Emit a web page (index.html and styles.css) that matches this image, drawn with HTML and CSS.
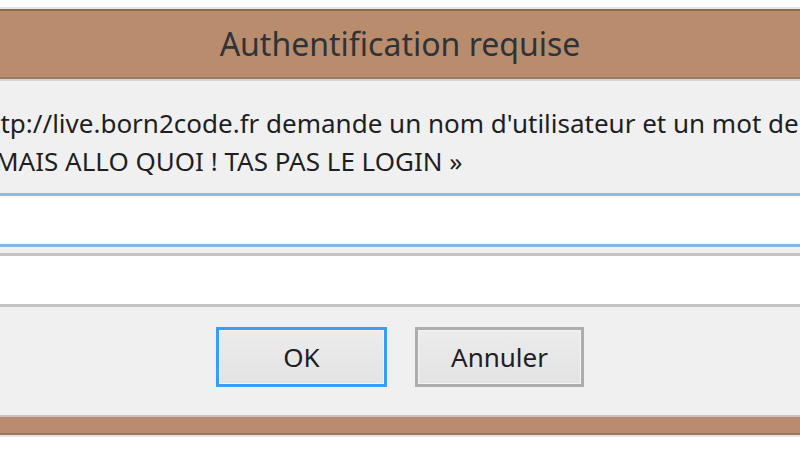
FILE: index.html
```html
<!DOCTYPE html>
<html lang="fr">
<head>
<meta charset="utf-8">
<title>Authentification requise</title>
<link rel="stylesheet" href="styles.css">
</head>
<body>
<div class="screen">
  <div class="top-strip"></div>
  <div class="window">
    <div class="titlebar">Authentification requise</div>
    <div class="content">
      <div class="message">
        <div class="line">http://live.born2code.fr demande un nom d'utilisateur et un mot de passe. Le site indique :</div>
        <div class="line">« MAIS ALLO QUOI ! TAS PAS LE LOGIN »</div>
      </div>
      <div class="field field-focus"></div>
      <div class="field"></div>
      <div class="buttons">
        <button class="btn btn-default">OK</button>
        <button class="btn">Annuler</button>
      </div>
    </div>
  </div>
  <div class="bottom-strip"></div>
</div>
</body>
</html>
```
FILE: styles.css
```css
html, body {
  margin: 0;
  padding: 0;
  background: #ffffff;
}

body {
  overflow: hidden;
  font-family: "Noto Sans", "Open Sans", sans-serif;
}

.screen {
  width: 800px;
  height: 450px;
  overflow: hidden;
}

.top-strip {
  height: 7px;
  background: #ffffff;
  border-bottom: 2px solid #e3e7e9;
}

.window {
  width: 920px;
  margin-left: -60px;
  background: #b98c6d;
  border-top: 2px solid #8c6b53;
  border-bottom: 2px solid #9a7760;
  padding-bottom: 16px;
}

.titlebar {
  height: 66px;
  line-height: 66px;
  text-align: center;
  font-size: 32px;
  color: #2e3337;
  border-bottom: 2px solid #9b7a62;
}

.content {
  background: #f0f0f0;
  border-top: 2px solid #d8d3cf;
  border-bottom: 2px solid #c9c3be;
  padding: 23px 0 28px;
}

.message {
  padding-left: 35px;
  font-size: 26px;
  line-height: 38px;
  color: #1e1e24;
}

.line {
  white-space: nowrap;
  overflow: hidden;
}

.field {
  height: 48px;
  margin: 0 30px;
  background: #ffffff;
  border-top: 3px solid #c3c3c3;
  border-bottom: 3px solid #c3c3c3;
}

.field-focus {
  margin-top: 13px;
  margin-bottom: 6px;
  border-top-color: #8dbbe9;
  border-bottom-color: #86b6e6;
}

.buttons {
  display: flex;
  justify-content: center;
  gap: 28px;
  margin-top: 20px;
}

.btn {
  box-sizing: border-box;
  width: 169px;
  height: 60px;
  padding: 0;
  font-family: "Noto Sans", "Open Sans", sans-serif;
  font-size: 26px;
  color: #202024;
  background: linear-gradient(#ececec, #e3e3e3);
  border: 3px solid #adadad;
  box-shadow: inset 0 0 0 1px #f4f4f4;
}

.btn-default {
  width: 171px;
  border-color: #3c9cfb;
}

.bottom-strip {
  height: 0;
  border-top: 2px solid #e4e4e4;
}
```
